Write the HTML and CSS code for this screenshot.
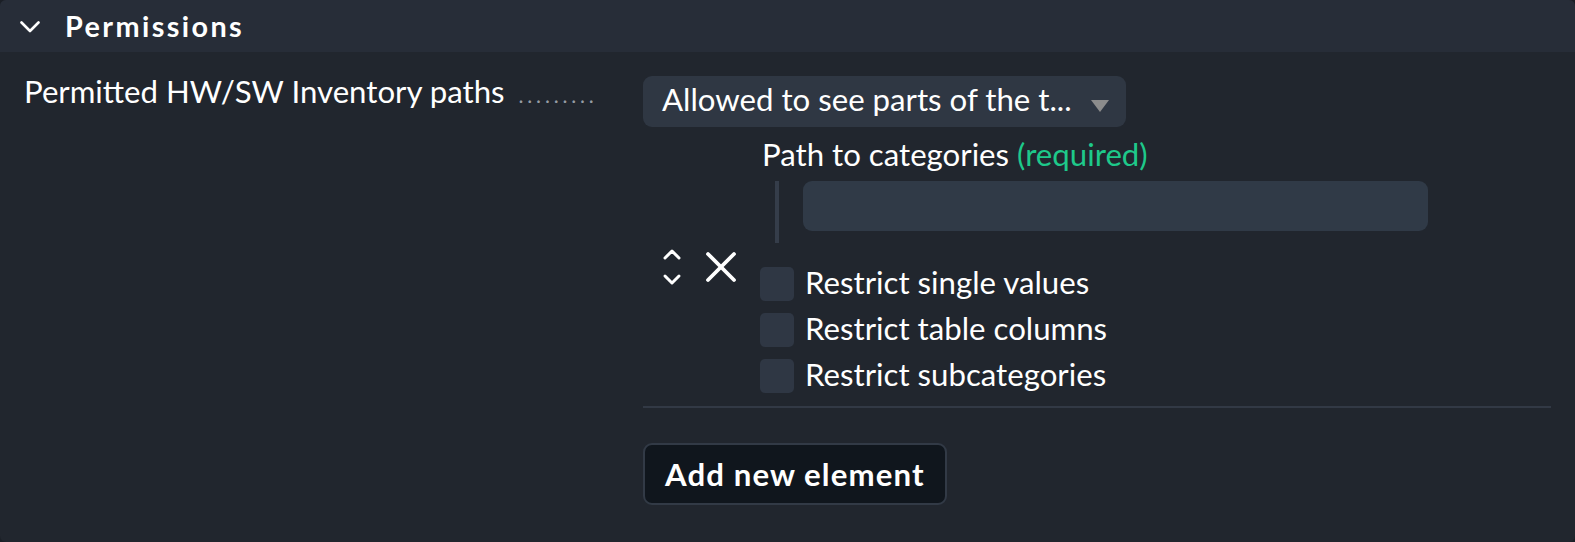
FILE: index.html
```html
<!DOCTYPE html>
<html>
<head>
<meta charset="utf-8">
<link rel="stylesheet" href="styles.css">
</head>
<body>
<div class="panel">
  <div class="panel-head">
    <svg class="chev" width="20" height="12" viewBox="0 0 20 12"><path d="M1.5 1.5 L10 10 L18.5 1.5" fill="none" stroke="#fff" stroke-width="2.6" stroke-linecap="round" stroke-linejoin="round"/></svg>
    <span class="panel-title">Permissions</span>
  </div>
  <div class="panel-body">
    <div class="legend"><span class="legend-text">Permitted HW/SW Inventory paths</span><span class="dots">.........</span></div>
    <div class="value">
      <div class="select">
        <span class="select-text">Allowed to see parts of the t...</span>
        <span class="select-arrow"></span>
      </div>
      <div class="entry">
        <div class="entry-ctrl">
          <svg class="updown" width="20" height="38" viewBox="0 0 20 38"><path d="M3 10 L10 3 L17 10" fill="none" stroke="#fff" stroke-width="3" stroke-linecap="round" stroke-linejoin="round"/><path d="M3 28 L10 35 L17 28" fill="none" stroke="#fff" stroke-width="3" stroke-linecap="round" stroke-linejoin="round"/></svg>
          <svg class="del" width="32" height="32" viewBox="0 0 32 32"><path d="M3 3 L29 29 M29 3 L3 29" fill="none" stroke="#fff" stroke-width="3.8" stroke-linecap="round"/></svg>
        </div>
        <div class="entry-body">
          <div class="field-title">Path to categories <span class="req">(required)</span></div>
          <div class="indent">
            <div class="input"></div>
          </div>
          <div class="checks">
            <label class="check"><span class="box"></span><span class="check-text">Restrict single values</span></label>
            <label class="check"><span class="box"></span><span class="check-text">Restrict table columns</span></label>
            <label class="check"><span class="box"></span><span class="check-text">Restrict subcategories</span></label>
          </div>
        </div>
      </div>
      <div class="sep"></div>
      <button class="add-btn">Add new element</button>
    </div>
  </div>
</div>
</body>
</html>
```
FILE: styles.css
```css
* { box-sizing: border-box; }
html, body {
  margin: 0;
  padding: 0;
  background: #1b1f26;
}
body {
  font-family: Lato, "Noto Sans", sans-serif;
  color: #ffffff;
  font-size: 31.2px;
  line-height: 38px;
  width: 1575px;
  height: 542px;
  overflow: hidden;
}
.panel {
  background: #21262e;
  height: 542px;
  border-radius: 6px;
  overflow: hidden;
}
.panel-head {
  height: 52px;
  background: #272d38;
  display: flex;
  align-items: center;
  padding-left: 20px;
}
.chev { display: block; margin-top: 2px; }
.panel-title {
  margin-left: 25px;
  font-weight: 700;
  font-size: 28.8px;
  letter-spacing: 2.4px;
  line-height: 1;
  margin-top: 1px;
}
.panel-body {
  display: flex;
  align-items: flex-start;
}
.legend {
  width: 643px;
  flex: none;
  padding-left: 24px;
  padding-top: 20px;
  white-space: nowrap;
}
.dots {
  color: #979ca4;
  font-size: 21px;
  margin-left: 14px;
  letter-spacing: 3.8px;
}
.value {
  flex: 1;
  padding-top: 24px;
}
.select {
  width: 483px;
  height: 51px;
  background: #2f3743;
  border-radius: 9px;
  display: flex;
  align-items: flex-start;
  padding-top: 4px;
  padding-left: 19px;
  padding-right: 17px;
}
.select-text { flex: 1; white-space: nowrap; }
.select-arrow {
  width: 0;
  height: 0;
  border-left: 9px solid transparent;
  border-right: 9px solid transparent;
  border-top: 12px solid #8c8c8c;
  margin-top: 20px;
}
.entry {
  display: flex;
  align-items: center;
  padding-top: 8px;
  padding-bottom: 7px;
}
.entry-ctrl {
  width: 117px;
  flex: none;
  display: flex;
  align-items: center;
  padding-left: 19px;
}
.updown { display: block; }
.del { display: block; margin-left: 23px; }
.entry-body { flex: 1; }
.field-title {
  padding-left: 2px;
  white-space: nowrap;
}
.req { color: #1ec98a; }
.indent {
  margin-top: 8px;
  margin-left: 15px;
  border-left: 4px solid #353d4a;
  padding-left: 24px;
  padding-bottom: 12px;
}
.input {
  width: 625px;
  height: 50px;
  background: #303a47;
  border-radius: 9px;
}
.checks {
  margin-top: 18px;
}
.check {
  display: flex;
  align-items: flex-start;
  height: 46px;
}
.box {
  width: 34px;
  height: 34px;
  margin-top: 6px;
  background: #2f3744;
  border-radius: 5px;
  margin-right: 11px;
  flex: none;
}
.check-text { white-space: nowrap; padding-top: 2px; }
.sep {
  width: 908px;
  height: 2px;
  background: #323945;
}
.add-btn {
  display: block;
  margin-top: 35px;
  height: 62px;
  padding: 0 20px;
  background: #10161d;
  border: 2px solid #323a46;
  border-radius: 9px;
  color: #fff;
  font-family: Lato, "Noto Sans", sans-serif;
  font-weight: 700;
  font-size: 31.2px;
  letter-spacing: 1.1px;
}
```
